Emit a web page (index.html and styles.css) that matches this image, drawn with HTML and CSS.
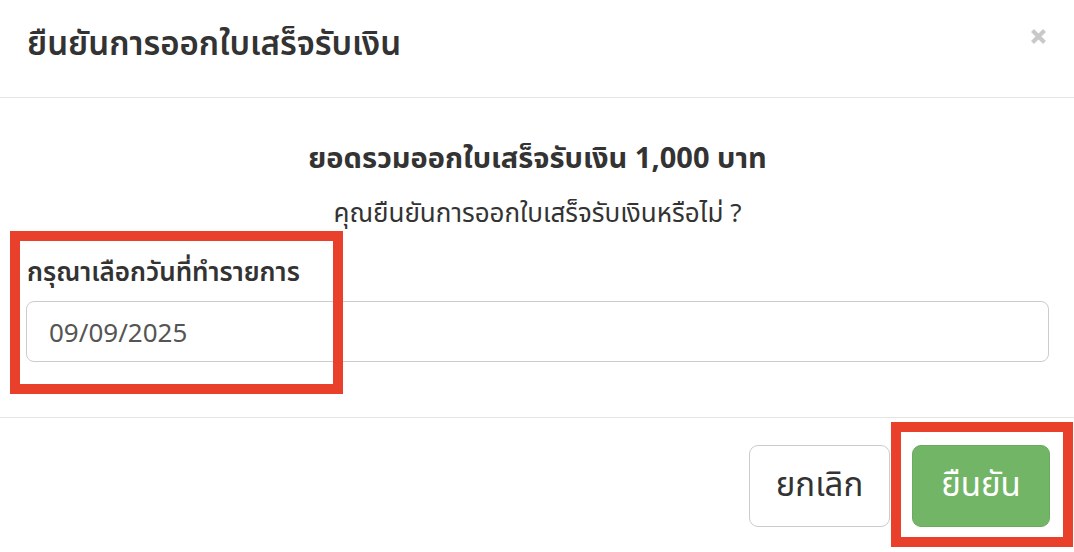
FILE: index.html
```html
<!DOCTYPE html>
<html lang="th">
<head>
  <meta charset="UTF-8" />
  <meta name="viewport" content="width=device-width, initial-scale=1.0"/>
  <title>ยืนยันการออกใบเสร็จรับเงิน</title>
  <link rel="stylesheet" href="styles.css">
</head>
<body>

  <div class="modal">
    <!-- HEADER -->
    <div class="modal-header">
      <h4 class="modal-title">ยืนยันการออกใบเสร็จรับเงิน</h4>
      <button class="close" type="button">
        <svg width="17" height="17" viewBox="0 0 17 17">
          <path d="M2.5 2.5 L14.5 14.5 M14.5 2.5 L2.5 14.5" stroke="#c9c9c9" stroke-width="4.2" stroke-linecap="butt"/>
        </svg>
      </button>
    </div>

    <!-- BODY -->
    <div class="modal-body">
      <h3 class="total">ยอดรวมออกใบเสร็จรับเงิน 1,000 บาท</h3>
      <p class="question">คุณยืนยันการออกใบเสร็จรับเงินหรือไม่ ?</p>
      <div class="form-group">
        <label for="docdate">กรุณาเลือกวันที่ทำรายการ</label>
        <input type="text" id="docdate" value="09/09/2025">
      </div>
      <div class="mark mark-date"></div>
    </div>

    <!-- FOOTER -->
    <div class="modal-footer">
      <button class="btn btn-default" type="button">ยกเลิก</button>
      <button class="btn btn-success" type="button">ยืนยัน</button>
      <div class="mark mark-ok"></div>
    </div>
  </div>

</body>
</html>
```

FILE: styles.css
```css
body {
  font-family: "Noto Sans", "Noto Sans Thai", "Liberation Sans", sans-serif;
  background: #ffffff;
  color: #333;
  margin: 0;
}
.modal {
  width: 1074px;
  height: 552px;
  background: #ffffff;
  overflow: hidden;
}
.modal-header {
  display: flex;
  align-items: center;
  justify-content: space-between;
  height: 98px;
  padding: 0 27px 11px 27px;
  box-sizing: border-box;
  border-bottom: 1px solid #e5e5e5;
}
.modal-title {
  margin: 0;
  font-size: 33px;
  line-height: 40px;
  font-weight: 600;
  color: #333;
}
.close {
  align-self: flex-start;
  margin-top: 28px;
  border: none;
  background: none;
  padding: 0;
  line-height: 0;
}
.modal-body {
  position: relative;
  height: 320px;
  padding: 0 25px 0 26px;
  border-bottom: 1px solid #e5e5e5;
  box-sizing: border-box;
}
.total {
  margin: 0;
  padding-top: 41px;
  text-align: center;
  font-size: 29px;
  line-height: 36px;
  font-weight: 700;
  color: #333;
}
.question {
  margin: 22px 0 0 0;
  text-align: center;
  font-size: 26px;
  line-height: 30px;
  color: #333;
}
.form-group {
  margin-top: 29px;
}
.form-group label {
  display: block;
  margin-left: 1px;
  font-size: 26px;
  line-height: 30px;
  font-weight: 600;
  color: #333;
}
.form-group input {
  display: block;
  width: 100%;
  height: 61px;
  margin-top: 15px;
  padding: 0 22px;
  box-sizing: border-box;
  font-family: "Noto Sans", "Liberation Sans", sans-serif;
  font-size: 26px;
  color: #555;
  border: 1px solid #cccccc;
  border-radius: 8px;
  outline: none;
}
.modal-footer {
  position: relative;
  display: flex;
  justify-content: flex-end;
  gap: 22px;
  padding: 27px 24px 0 0;
}
.btn {
  height: 82px;
  padding: 0;
  font-family: inherit;
  font-size: 33px;
  border-radius: 9px;
  cursor: pointer;
}
.btn-default {
  width: 141px;
  background: #ffffff;
  color: #333;
  border: 1px solid #cccccc;
}
.btn-success {
  width: 138px;
  background: #73b566;
  color: #ffffff;
  border: 1px solid #6aab5d;
}
.mark {
  position: absolute;
  border: 10px solid #e8402a;
  pointer-events: none;
}
.mark-date {
  left: 10px;
  top: 133px;
  width: 313px;
  height: 143px;
}
.mark-ok {
  left: 891px;
  top: 4px;
  width: 162px;
  height: 105px;
}
```
